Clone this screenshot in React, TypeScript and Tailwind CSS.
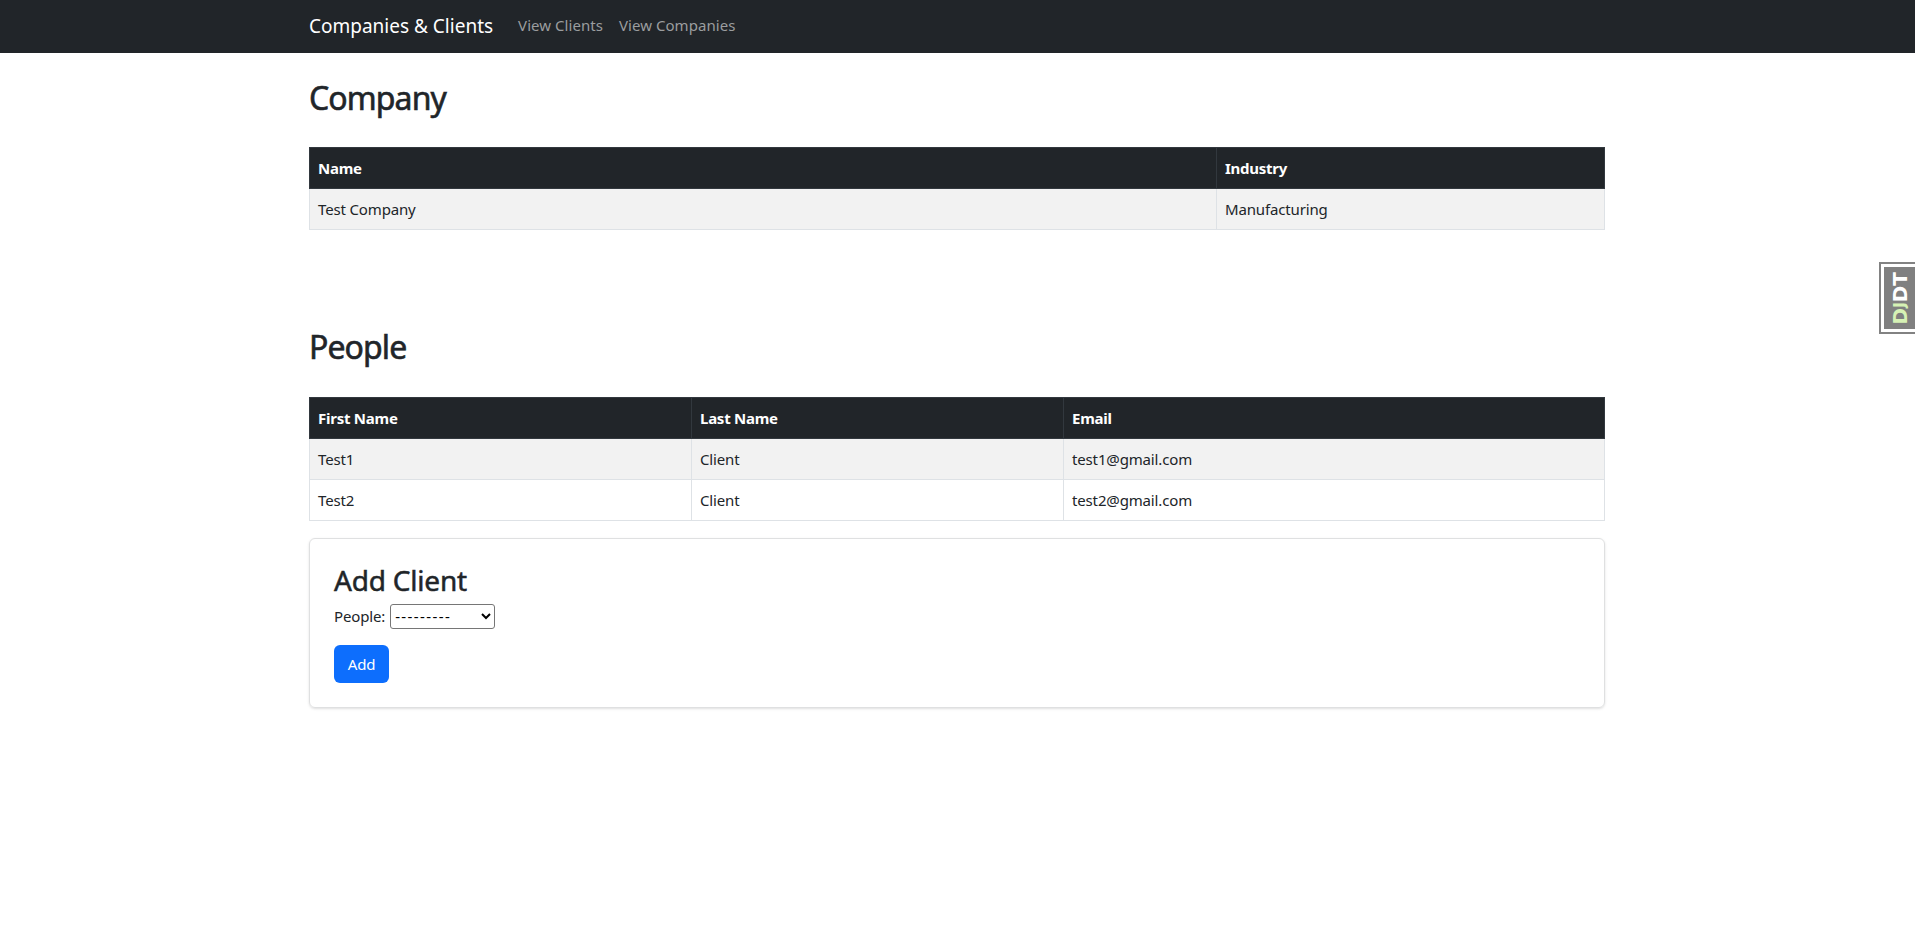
const font = { fontFamily: '"Noto Sans", sans-serif' };

function App() {
  const th = "border border-[#32383e] px-2 py-2 text-left text-[15px] font-bold leading-[24px] text-white tracking-[-0.25px]";
  const td = "border border-[#dee2e6] px-2 py-2 text-[15px] leading-[24px] text-[#212529] tracking-[-0.15px]";
  const heading = "text-[32px] leading-[38px] font-normal tracking-[-0.9px] [-webkit-text-stroke:0.6px_#212529]";
  return (
    <div className="min-h-[940px] bg-white text-[#212529]" style={font}>
      <nav className="h-[53px] bg-[#212529]">
        <div className="mx-auto flex h-full w-[1321px] items-center pl-3 pr-[13px]">
          <span className="mr-[17px] text-[19px] text-white">Companies &amp; Clients</span>
          <span className="mx-2 -mt-[2px] text-[15px] tracking-[0.05px] text-[#9b9d9f]">View Clients</span>
          <span className="mx-2 -mt-[2px] text-[15px] tracking-[0.05px] text-[#9b9d9f]">View Companies</span>
        </div>
      </nav>
      <main className="mx-auto w-[1321px] pl-3 pr-[13px]">
        <h2 className={`mt-[26px] mb-[30px] ${heading}`}>Company</h2>
        <table className="w-full table-fixed border-collapse">
          <thead>
            <tr className="bg-[#212529]">
              <th className={`${th} w-[907px]`}>Name</th>
              <th className={th}>Industry</th>
            </tr>
          </thead>
          <tbody>
            <tr className="bg-[#f2f2f2]">
              <td className={td}>Test Company</td>
              <td className={td}>Manufacturing</td>
            </tr>
          </tbody>
        </table>
        <h2 className={`mt-[98px] mb-[31px] ${heading}`}>People</h2>
        <table className="w-full table-fixed border-collapse">
          <thead>
            <tr className="bg-[#212529]">
              <th className={`${th} w-[382px]`}>First Name</th>
              <th className={`${th} w-[372px]`}>Last Name</th>
              <th className={th}>Email</th>
            </tr>
          </thead>
          <tbody>
            <tr className="bg-[#f2f2f2]">
              <td className={td}>Test1</td>
              <td className={td}>Client</td>
              <td className={td}>test1@gmail.com</td>
            </tr>
            <tr>
              <td className={td}>Test2</td>
              <td className={td}>Client</td>
              <td className={td}>test2@gmail.com</td>
            </tr>
          </tbody>
        </table>
        <section className="mt-[17px] rounded-md border border-[#dfe0e1] p-6 shadow-sm">
          <h3 className="text-[28px] leading-[34px] font-normal tracking-[-0.2px] [-webkit-text-stroke:0.5px_#212529]">Add Client</h3>
          <div className="mt-[7px] flex h-6 items-center">
            <span className="mt-px mr-[5px] text-[15px] tracking-[-0.15px]">People:</span>
            <select className="h-[25px] w-[105px] rounded-[3px] border border-[#767676] bg-white text-[15px] tracking-[1.4px] text-black" style={font}>
              <option>---------</option>
            </select>
          </div>
          <button className="mt-[17px] h-[38px] w-[55px] rounded-md bg-[#0d6efd] text-[15px] tracking-[-0.15px] text-white">Add</button>
        </section>
      </main>
      <div className="fixed top-[262px] right-0 flex h-[72px] w-[36px] items-center justify-center border-y-2 border-l-2 border-[#828282] bg-white py-[3px] pl-[3px]">
        <div className="flex h-full w-full items-center justify-center bg-[#808080]">
          <span className="rotate-180 text-[20px] leading-none font-bold [writing-mode:vertical-rl]" style={{ fontFamily: '"DejaVu Sans", sans-serif' }}>
            <span className="text-[#d6f2b5]">D<span className="text-[15px]">J</span></span>
            <span className="text-white">DT</span>
          </span>
        </div>
      </div>
    </div>
  );
}

export default App;
